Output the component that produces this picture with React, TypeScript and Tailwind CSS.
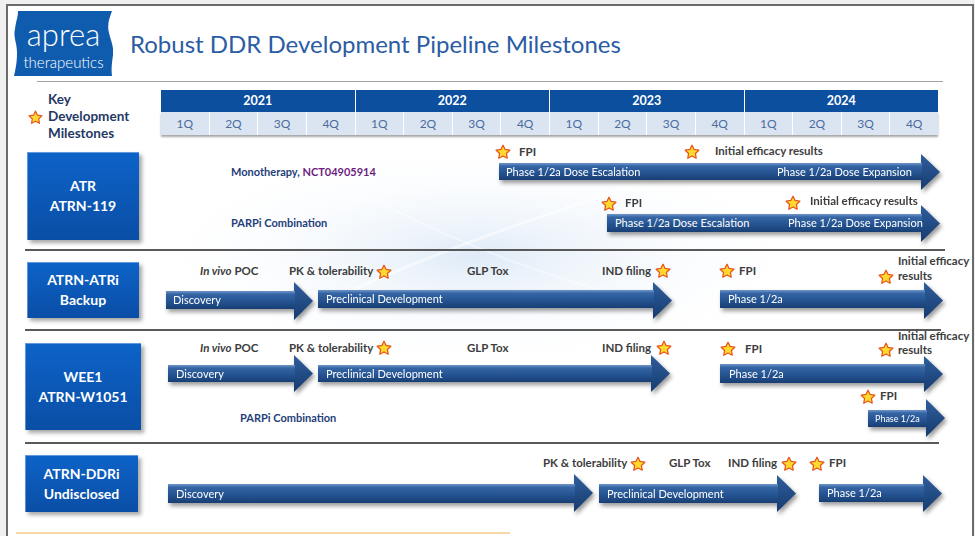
import { useId } from "react";
import type { ReactNode } from "react";

const LANE_X = 161;

type Lbl = { x: number; y: number; t: ReactNode; cls?: string };
type Arw = {
  x: number;
  tip: number;
  y0: number;
  y1: number;
  s0: number;
  s1: number;
  labels: { x: number; t: string }[];
  small?: boolean;
};
type RowData = { top: number; labels: Lbl[]; stars: [number, number][]; arrows: Arw[] };

function Star({ x, y, top }: { x: number; y: number; top: number }) {
  const size = 16;
  return (
    <svg
      className="absolute"
      style={{ left: x - LANE_X - size / 2, top: y - top - size / 2 }}
      width={size}
      height={size}
      viewBox="0 0 20 20"
    >
      <polygon
        points="10,1.5 12.65,6.86 18.56,7.72 14.28,11.89 15.29,17.78 10,15 4.71,17.78 5.72,11.89 1.44,7.72 7.35,6.86"
        fill="#ffd92e"
        stroke="#e5561e"
        strokeWidth="1.6"
        strokeLinejoin="round"
      />
    </svg>
  );
}

function Arrow({ a, top }: { a: Arw; top: number }) {
  const id = useId().replace(/[^a-zA-Z0-9]/g, "");
  const w = a.tip - a.x;
  const h = a.y1 - a.y0;
  const s0 = a.s0 - a.y0;
  const s1 = a.s1 - a.y0;
  const hw = 19;
  return (
    <div
      className="absolute drop-shadow-[2px_3px_2px_rgba(0,0,0,0.4)]"
      style={{ left: a.x - LANE_X, top: a.y0 - top, width: w, height: h }}
    >
      <svg className="absolute inset-0" width={w} height={h}>
        <defs>
          <linearGradient id={`s${id}`} gradientUnits="userSpaceOnUse" x1="0" y1={s0} x2="0" y2={s1}>
            <stop offset="0" stopColor="#7096c8" />
            <stop offset="0.18" stopColor="#3565a5" />
            <stop offset="0.6" stopColor="#245290" />
            <stop offset="1" stopColor="#183f74" />
          </linearGradient>
          <linearGradient id={`h${id}`} x1="0" y1="0" x2="0" y2="1">
            <stop offset="0" stopColor="#2f5e9c" />
            <stop offset="1" stopColor="#163b70" />
          </linearGradient>
        </defs>
        <polygon
          points={`${w - hw},0 ${w},${h / 2} ${w - hw},${h}`}
          fill={`url(#h${id})`}
        />
        <rect x="0" y={s0} width={w - hw + 1} height={s1 - s0} fill={`url(#s${id})`} />
      </svg>
      {a.labels.map((l) => (
        <span
          key={l.t + l.x}
          className={`absolute whitespace-nowrap text-white ${a.small ? "text-[9px] leading-[11px]" : "text-[11px] leading-[12px]"}`}
          style={{ left: l.x - a.x, top: (s0 + s1) / 2 - (a.small ? 5.5 : 6) }}
        >
          {l.t}
        </span>
      ))}
    </div>
  );
}

function Lane({ d }: { d: RowData }) {
  return (
    <div className="relative w-[777px] self-stretch">
      {d.arrows.map((a) => (
        <Arrow key={a.x + "-" + a.y0} a={a} top={d.top} />
      ))}
      {d.labels.map((l, i) => (
        <div
          key={i}
          className={`absolute whitespace-nowrap ${l.cls ?? "text-[11.5px] leading-[12px] font-bold text-[#3d3d3d]"}`}
          style={{ left: l.x - LANE_X, top: l.y - d.top - 6 }}
        >
          {l.t}
        </div>
      ))}
      {d.stars.map(([x, y]) => (
        <Star key={x + "-" + y} x={x} y={y} top={d.top} />
      ))}
    </div>
  );
}

const blue = "text-[11px] leading-[12px] font-bold text-[#1f4079]";
const pos = <><i>In vivo</i> POC</>;

const row1: RowData = {
  top: 137,
  labels: [
    {
      x: 231,
      y: 172,
      t: (
        <>
          <span>Monotherapy, </span>
          <span className="text-[#6d1f7e]">NCT04905914</span>
        </>
      ),
      cls: blue,
    },
    { x: 231, y: 223, t: "PARPi Combination", cls: blue },
    { x: 519, y: 152, t: "FPI" },
    { x: 715, y: 151, t: "Initial efficacy results" },
    { x: 625, y: 203, t: "FPI" },
    { x: 810, y: 201, t: "Initial efficacy results" },
  ],
  stars: [
    [503, 152],
    [692, 152],
    [609, 204],
    [793, 203],
  ],
  arrows: [
    {
      x: 499, tip: 940, y0: 154, y1: 190, s0: 163, s1: 180,
      labels: [
        { x: 506, t: "Phase 1/2a Dose Escalation" },
        { x: 777, t: "Phase 1/2a Dose Expansion" },
      ],
    },
    {
      x: 607, tip: 940, y0: 205, y1: 242, s0: 214, s1: 232,
      labels: [
        { x: 615, t: "Phase 1/2a Dose Escalation" },
        { x: 788, t: "Phase 1/2a Dose Expansion" },
      ],
    },
  ],
};

const row2: RowData = {
  top: 251,
  labels: [
    { x: 200, y: 271, t: pos },
    { x: 289, y: 271, t: "PK & tolerability" },
    { x: 467, y: 271, t: "GLP Tox" },
    { x: 602, y: 271, t: "IND filing" },
    { x: 739, y: 271, t: "FPI" },
    { x: 898, y: 261, t: "Initial efficacy" },
    { x: 898, y: 276, t: "results" },
  ],
  stars: [
    [384, 272],
    [663, 271],
    [727, 271],
    [886, 277],
  ],
  arrows: [
    { x: 166, tip: 313, y0: 282, y1: 320, s0: 291, s1: 309, labels: [{ x: 173, t: "Discovery" }] },
    { x: 318, tip: 672, y0: 282, y1: 319, s0: 290, s1: 308, labels: [{ x: 326, t: "Preclinical Development" }] },
    { x: 720, tip: 943, y0: 282, y1: 319, s0: 290, s1: 308, labels: [{ x: 728, t: "Phase 1/2a" }] },
  ],
};

const row3: RowData = {
  top: 331,
  labels: [
    { x: 200, y: 348, t: pos },
    { x: 289, y: 348, t: "PK & tolerability" },
    { x: 467, y: 348, t: "GLP Tox" },
    { x: 602, y: 348, t: "IND filing" },
    { x: 745, y: 349, t: "FPI" },
    { x: 898, y: 336, t: "Initial efficacy" },
    { x: 898, y: 350, t: "results" },
    { x: 240, y: 418, t: "PARPi Combination", cls: blue },
    { x: 880, y: 396, t: "FPI" },
  ],
  stars: [
    [384, 348],
    [664, 348],
    [728, 349],
    [886, 350],
    [868, 397],
  ],
  arrows: [
    { x: 168, tip: 313, y0: 355, y1: 392, s0: 365, s1: 382, labels: [{ x: 176, t: "Discovery" }] },
    { x: 318, tip: 670, y0: 355, y1: 392, s0: 365, s1: 382, labels: [{ x: 326, t: "Preclinical Development" }] },
    { x: 720, tip: 943, y0: 356, y1: 392, s0: 364, s1: 383, labels: [{ x: 729, t: "Phase 1/2a" }] },
    { x: 868, tip: 945, y0: 399, y1: 437, s0: 410, s1: 427, labels: [{ x: 875, t: "Phase 1/2a" }], small: true },
  ],
};

const row4: RowData = {
  top: 444,
  labels: [
    { x: 543, y: 463, t: "PK & tolerability" },
    { x: 669, y: 463, t: "GLP Tox" },
    { x: 728, y: 463, t: "IND filing" },
    { x: 829, y: 463, t: "FPI" },
  ],
  stars: [
    [638, 464],
    [789, 464],
    [817, 464],
  ],
  arrows: [
    { x: 168, tip: 593, y0: 474, y1: 512, s0: 484, s1: 503, labels: [{ x: 176, t: "Discovery" }] },
    { x: 599, tip: 796, y0: 475, y1: 512, s0: 484, s1: 503, labels: [{ x: 607, t: "Preclinical Development" }] },
    { x: 819, tip: 942, y0: 475, y1: 512, s0: 484, s1: 502, labels: [{ x: 827, t: "Phase 1/2a" }] },
  ],
};

function Box({ children, className }: { children: ReactNode; className: string }) {
  return (
    <div
      className={`flex shrink-0 flex-col items-center justify-center bg-gradient-to-b from-[#0d63c8] to-[#0a4ea6] text-[14px] font-bold leading-[20px] text-white shadow-[inset_1px_1px_0_rgba(255,255,255,0.35),3px_3px_4px_rgba(0,0,0,0.35)] ${className}`}
    >
      {children}
    </div>
  );
}

function Logo() {
  return (
    <div className="relative ml-[6px] h-[65px] w-[99px] shrink-0">
      <svg className="absolute inset-0" width="99" height="65" viewBox="0 0 99 65">
        <path
          d="M4,0 L98,0 C95,8 93,14 95,22 C97,30 100,36 99,44 C98,52 97,58 98,65 L0,65 C2,56 3,50 3,42 C3,32 -1,26 1,18 C2,10 4,6 4,0 Z"
          fill="#0f5cae"
        />
      </svg>
      <div className="relative flex h-full flex-col items-center pt-[5px] text-white">
        <span className="text-[31px] font-light leading-[37px]">aprea</span>
        <span className="text-[15px] font-light leading-[18px]">therapeutics</span>
      </div>
    </div>
  );
}

const years = ["2021", "2022", "2023", "2024"];

export default function App() {
  return (
    <div className="h-[536px] w-[975px] overflow-hidden bg-[#f0f0f0] pl-[6px] pt-[4px] font-['Lato',sans-serif]">
      <div className="relative h-[532px] w-[968px] border-x-2 border-t-2 border-[#6b6b6b] bg-white">
        <svg className="pointer-events-none absolute inset-0" width="964" height="530">
          <defs>
            <radialGradient id="wm" cx="0.5" cy="0.5" r="0.5">
              <stop offset="0" stopColor="#d4e4f5" stopOpacity="0.75" />
              <stop offset="1" stopColor="#ffffff" stopOpacity="0" />
            </radialGradient>
          </defs>
          <ellipse cx="470" cy="250" rx="340" ry="115" fill="url(#wm)" />
          <path d="M250 330 C400 250 560 200 780 130" stroke="#ffffff" strokeWidth="3" fill="none" opacity="0.5" />
          <path d="M300 160 C430 230 560 290 760 320" stroke="#ffffff" strokeWidth="2" fill="none" opacity="0.4" />
        </svg>

        <div className="relative">
          <div className="flex h-[75px] items-center">
            <Logo />
            <h1 className="ml-[17px] text-[24px] font-normal leading-[28px] text-[#2b5ca4]">
              Robust DDR Development Pipeline Milestones
            </h1>
          </div>
          <div className="ml-[29px] h-px w-[906px] bg-[#a3a3a3]" />

          <div className="mt-[8px] flex h-[47px]">
            <div className="flex w-[153px] shrink-0 items-start">
              <svg className="ml-[20px] mt-[20px] shrink-0" width="15" height="15" viewBox="0 0 20 20">
                <polygon
                  points="10,1.5 12.65,6.86 18.56,7.72 14.28,11.89 15.29,17.78 10,15 4.71,17.78 5.72,11.89 1.44,7.72 7.35,6.86"
                  fill="#ffd92e"
                  stroke="#e5561e"
                  strokeWidth="1.6"
                  strokeLinejoin="round"
                />
              </svg>
              <div className="ml-[5px] mt-[1px] text-[13.5px] font-bold leading-[17px] text-[#1f3864]">
                <div>Key</div>
                <div>Development</div>
                <div>Milestones</div>
              </div>
            </div>
            <div className="w-[777px] shrink-0">
              <div className="flex h-[22px] bg-[#0c4f9f]">
                {years.map((y, i) => (
                  <div
                    key={y}
                    className={`flex flex-1 items-center justify-center text-[12.5px] font-bold text-white ${i ? "border-l border-white" : ""}`}
                  >
                    {y}
                  </div>
                ))}
              </div>
              <div className="flex h-[23px] bg-[#dbe5f1] shadow-[0_2px_2px_rgba(0,0,0,0.35)]">
                {years.flatMap((y) =>
                  ["1Q", "2Q", "3Q", "4Q"].map((q, i) => (
                    <div
                      key={y + q}
                      className={`flex flex-1 items-center justify-center text-[12px] text-[#4b6d9f] ${y === "2021" && i === 0 ? "" : "border-l border-white"}`}
                    >
                      {q}
                    </div>
                  ))
                )}
              </div>
            </div>
          </div>

          <div className="flex h-[112px]">
            <Box className="ml-[19px] mt-[15px] h-[88px] w-[112px]">
              <span>ATR</span>
              <span>ATRN-119</span>
            </Box>
            <div className="ml-[22px] flex">
              <Lane d={row1} />
            </div>
          </div>
          <div className="ml-[17px] h-[2px] w-[920px] bg-[#595959]" />

          <div className="flex h-[78px]">
            <Box className="ml-[19px] mt-[11px] h-[56px] w-[112px]">
              <span>ATRN-ATRi</span>
              <span>Backup</span>
            </Box>
            <div className="ml-[22px] flex">
              <Lane d={row2} />
            </div>
          </div>
          <div className="ml-[17px] h-[2px] w-[916px] bg-[#595959]" />

          <div className="flex h-[111px]">
            <Box className="ml-[17px] mt-[12px] h-[87px] w-[116px]">
              <span>WEE1</span>
              <span>ATRN-W1051</span>
            </Box>
            <div className="ml-[20px] flex">
              <Lane d={row3} />
            </div>
          </div>
          <div className="ml-[17px] h-[2px] w-[914px] bg-[#595959]" />

          <div className="flex h-[80px]">
            <Box className="ml-[17px] mt-[11px] h-[57px] w-[113px]">
              <span>ATRN-DDRi</span>
              <span>Undisclosed</span>
            </Box>
            <div className="ml-[23px] flex">
              <Lane d={row4} />
            </div>
          </div>
          <div className="ml-[8px] mt-[8px] h-[2px] w-[494px] bg-[#f7d7a6]" />
        </div>
      </div>
    </div>
  );
}
